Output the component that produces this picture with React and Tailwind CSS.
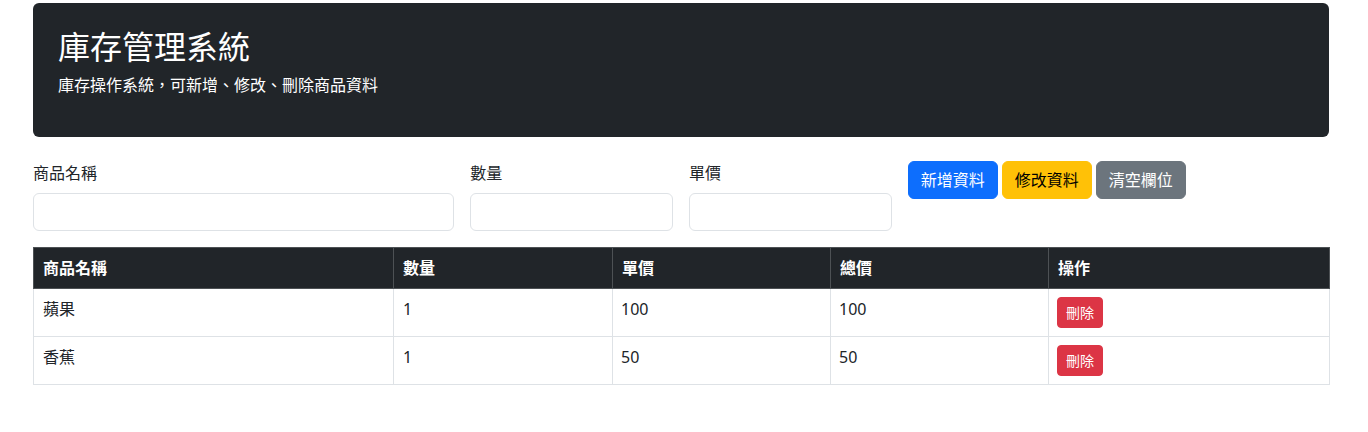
import React from "react";

const rows = [
  { name: "蘋果", qty: 1, price: 100, total: 100 },
  { name: "香蕉", qty: 1, price: 50, total: 50 },
];

export default function App() {
  return (
    <div
      className="w-[1368px] min-h-[432px] bg-white text-[#212529] pl-[33px] pt-[3px]"
      style={{ fontFamily: '"Noto Sans", "Noto Sans CJK TC", sans-serif' }}
    >
      <div className="w-[1296px]">
        <div className="bg-[#212529] rounded-[6px] text-white px-[25px] pt-[25px] pb-[40px]">
          <h2 className="text-[32px] leading-[38px] font-normal mb-[7px]">庫存管理系統</h2>
          <p className="text-[16px] leading-[24px]">庫存操作系統，可新增、修改、刪除商品資料</p>
        </div>

        <div className="grid grid-cols-12 gap-x-4 mt-6">
          <div className="col-span-4">
            <label className="block text-[16px] leading-[24px] mb-2">商品名稱</label>
            <input className="block w-full h-[38px] border border-[#dee2e6] rounded-[6px] px-3 outline-none" />
          </div>
          <div className="col-span-2">
            <label className="block text-[16px] leading-[24px] mb-2">數量</label>
            <input className="block w-full h-[38px] border border-[#dee2e6] rounded-[6px] px-3 outline-none" />
          </div>
          <div className="col-span-2">
            <label className="block text-[16px] leading-[24px] mb-2">單價</label>
            <input className="block w-full h-[38px] border border-[#dee2e6] rounded-[6px] px-3 outline-none" />
          </div>
          <div className="col-span-4 flex items-start gap-[4px]">
            <button className="h-[38px] px-3 border border-[#0d6efd] bg-[#0d6efd] text-white rounded-[6px] text-[16px] leading-[24px]">新增資料</button>
            <button className="h-[38px] px-3 border border-[#ffc107] bg-[#ffc107] text-black rounded-[6px] text-[16px] leading-[24px]">修改資料</button>
            <button className="h-[38px] px-3 border border-[#6c757d] bg-[#6c757d] text-white rounded-[6px] text-[16px] leading-[24px]">清空欄位</button>
          </div>
        </div>

        <table className="w-[1296px] mt-4 border-collapse table-fixed text-[16px] leading-[24px]">
          <colgroup>
            <col className="w-[360px]" />
            <col className="w-[219px]" />
            <col className="w-[218px]" />
            <col className="w-[218px]" />
            <col className="w-[281px]" />
          </colgroup>
          <thead>
            <tr className="bg-[#212529] text-white">
              {["商品名稱", "數量", "單價", "總價", "操作"].map((h) => (
                <th key={h} className="text-left font-bold px-[9px] py-[8px] border border-[#4d5154]">
                  {h}
                </th>
              ))}
            </tr>
          </thead>
          <tbody>
            {rows.map((r) => (
              <tr key={r.name}>
                <td className="align-top px-[9px] py-[8px] border border-[#dee2e6]">{r.name}</td>
                <td className="align-top px-[9px] py-[8px] border border-[#dee2e6]">{r.qty}</td>
                <td className="align-top px-[8px] py-[8px] border border-[#dee2e6]">{r.price}</td>
                <td className="align-top px-[8px] py-[8px] border border-[#dee2e6]">{r.total}</td>
                <td className="align-top px-[8px] py-[8px] border border-[#dee2e6]">
                  <button className="h-[31px] px-[8px] border border-[#dc3545] bg-[#dc3545] text-white rounded-[4px] text-[14px] leading-[21px]">
                    刪除
                  </button>
                </td>
              </tr>
            ))}
          </tbody>
        </table>
      </div>
    </div>
  );
}
